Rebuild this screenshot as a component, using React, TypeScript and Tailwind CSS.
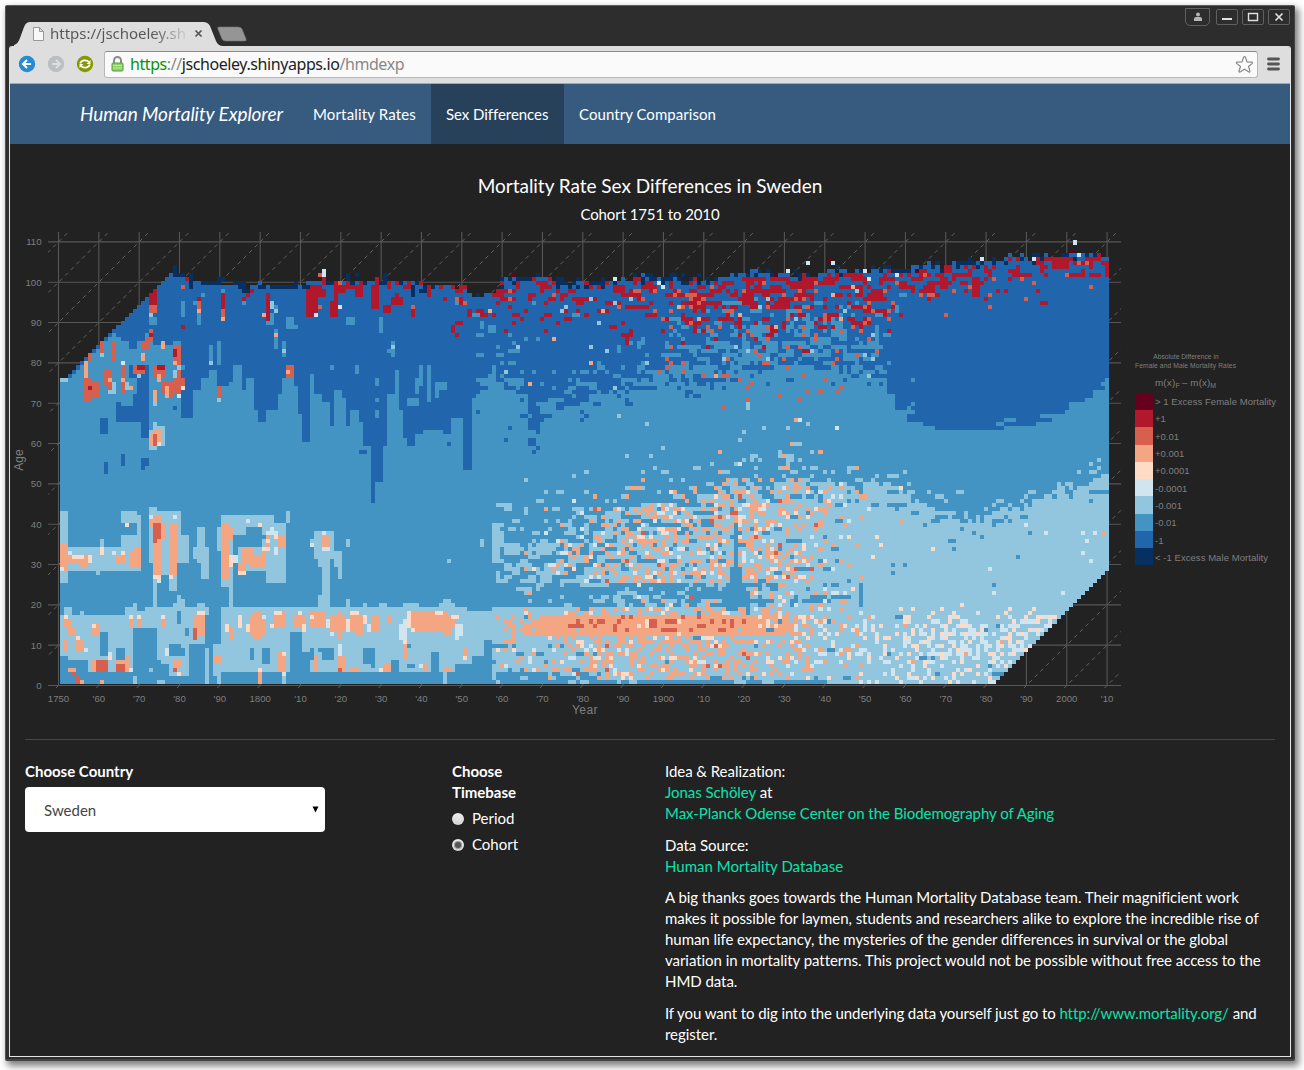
import React from "react";

const COLORS: Record<string, string> = {
  X: "#67001f", R: "#b2182b", O: "#d6604d", S: "#f4a582", P: "#fddbc7",
  W: "#d1e5f0", L: "#92c5de", M: "#4393c3", B: "#2166ac", N: "#053061",
};

const COLS = 260;
const ROWS = 111;

type Steps = number[][];

function lerp(p: Steps, c: number) {
  for (let i = 1; i < p.length; i++) {
    if (c <= p[i][0]) {
      const [a, b] = [p[i - 1], p[i]];
      return a[1] + ((b[1] - a[1]) * (c - a[0])) / (b[0] - a[0]);
    }
  }
  return p[p.length - 1][1];
}

function step(p: Steps, c: number) {
  let v = p[0][1];
  for (const q of p) if (c >= q[0]) v = q[1];
  return v;
}

const TOP: Steps = [[0, 76], [1, 76], [2, 77], [27, 102], [28, 104], [29, 102], [31, 101], [32, 102], [33, 100], [44, 99], [46, 98], [49, 100], [50, 99], [60, 99], [62, 100], [88, 100], [90, 99], [100, 99], [103, 98], [107, 99], [110, 101], [120, 101], [125, 100], [156, 101], [175, 102], [205, 103], [216, 104], [230, 105], [238, 106], [259, 107]];

const DARK: Steps = [[0, 200], [14, 86], [15, 85], [17, 83], [19, 85], [21, 87], [23, 84], [25, 84], [28, 85], [30, 79], [31, 66], [33, 73], [35, 76], [37, 78], [39, 74], [42, 75], [43, 79], [45, 73], [46, 76], [48, 68], [49, 65], [51, 68], [54, 72], [55, 76], [56, 79], [58, 74], [59, 67], [60, 60], [62, 77], [63, 72], [65, 70], [67, 64], [68, 73], [70, 71], [71, 64], [72, 68], [74, 65], [75, 59], [77, 45], [78, 50], [80, 59], [81, 72], [83, 77], [84, 68], [85, 61], [88, 62], [90, 63], [95, 62], [97, 66], [100, 53], [102, 71], [104, 73], [106, 75], [108, 77], [110, 73], [112, 71], [114, 70], [116, 62], [119, 69], [131, 72], [137, 73], [142, 75], [147, 77], [154, 75], [165, 78], [200, 78], [203, 76], [205, 72], [207, 68], [210, 65], [214, 64], [217, 63], [234, 64], [242, 65], [246, 67], [249, 68], [250, 70], [254, 71], [256, 72], [258, 73], [259, 74]];

const LIGHT: Steps = [[107, 39], [120, 40], [135, 42], [150, 44], [164, 47], [172, 49], [190, 49], [200, 48], [210, 46], [216, 43], [222, 40], [230, 41], [236, 43], [244, 46], [252, 48], [259, 50]];

/* key followed by column, row, width, height quadruples */
const PATCHES: [string, string][] = [
  ["L", "0 7 2 10 1 17 2 2 2 6 5 11 7 3 11 14 5 17 1 1 16 17 3 2 18 14 5 4 18 18 1 2 21 18 9 1 23 12 6 7 24 6 9 9 25 5 9 2 27 2 5 6 28 19 3 1 29 20 2 1 29 21 1 1 30 10 7 9 34 19 2 1 36 0 1 9 38 2 2 8 40 3 67 15 40 18 61 1 85 19 4 1 94 19 4 1 95 20 2 1 71 19 1 2 75 19 1 1 79 19 2 1 18 0 1 2 24 0 2 1 39 0 1 2 55 0 1 3 22 3 1 1 95 0 1 3 107 18 2 1"],
  ["M", "10 7 2 6 14 6 2 3 19 4 5 10 18 5 1 8 26 7 5 2 27 9 3 1 31 12 1 2 32 4 4 6 36 9 1 8 37 10 2 9 34 2 2 3 47 6 1 3 50 5 2 4 57 3 3 10 60 3 2 5 62 6 1 3 65 6 3 3 64 8 1 1 75 5 3 4 77 4 1 1 82 3 2 3 86 9 1 1 92 2 2 6 98 3 4 2 102 0 5 7 105 7 2 4 0 0 9 3 99 2 4 2 86 4 2 1"],
  ["L", "0 25 2 18 1 42 1 1 2 28 18 6 15 34 4 3 15 40 4 3 19 34 1 8 9 27 1 1 10 34 1 2 18 42 1 1 22 30 8 13 22 42 2 2 23 19 1 12 24 27 4 5 27 23 2 5 29 30 3 7 29 36 1 6 34 30 2 9 33 31 4 3 35 26 2 6 39 33 1 6 40 24 3 18 42 19 1 9 42 37 11 5 44 28 12 6 51 25 5 15 48 33 4 3 56 40 1 3 63 31 5 7 64 29 3 2 65 19 2 12 64 18 1 4 68 29 2 4 69 26 1 3 62 34 1 2 71 34 1 2 96 30 1 1 104 34 1 2"],
  ["M", "46 34 4 5 43 32 1 3 44 24 7 3 43 34 1 1"],
  ["S", "0 28 2 7 2 30 5 2 5 29 2 3 14 30 2 2 17 29 3 4 18 32 2 2 22 39 2 2 23 27 2 15 24 36 2 4 27 27 2 13 40 26 2 14 42 36 1 3 44 28 2 2 45 30 3 4 47 29 4 3 50 30 1 4 51 34 1 4 54 34 2 3 65 34 2 3 1 14 2 2 1 8 1 3 2 12 2 2 4 8 2 3 8 12 2 3 2 3 2 1 8 3 4 3 14 3 3 3 16 6 1 1 17 14 1 2 19 14 1 2 25 14 1 2 28 4 2 2 33 12 3 5 42 11 1 3 38 5 2 2 47 12 4 5 48 11 2 7 49 0 1 4 53 14 3 4 54 3 2 5 58 14 3 3 62 14 4 4 63 3 1 4 67 13 4 4 69 11 1 7 72 13 3 4 73 12 2 1 77 13 2 4 81 15 1 2 87 14 9 4 88 13 9 3 94 14 4 3 95 12 2 1 85 6 1 4 69 3 2 4 72 3 2 1 80 3 2 2 90 3 1 2 95 3 2 1 100 7 1 2 10 0 1 1 5 0 1 1"],
  ["P", "3 31 3 1 7 30 1 2 10 32 1 2 15 32 1 1 16 39 1 1 23 26 2 1 27 26 1 1 44 27 2 1 42 29 1 3 50 33 2 1 49 39 1 1 53 36 1 2 51 35 1 1 1 16 1 1 8 14 1 1 4 11 1 1 17 16 1 1 19 16 1 1 25 16 1 1 34 17 2 1 44 14 1 3 46 13 1 2 53 17 2 1 52 14 1 1 59 17 1 1 60 13 1 2 62 16 1 1 86 14 1 4 93 17 2 1 97 16 2 1 87 13 1 1 71 14 1 2 75 15 1 2 72 17 2 1 85 10 1 1 12 6 1 1 49 3 1 1 55 7 1 1 69 7 1 1 41 13 1 2 29 2 1 1 79 3 1 1 100 6 1 1"],
  ["W", "2 32 1 1 0 28 1 1 13 32 1 1 24 25 1 1 28 41 1 1 22 41 1 1 43 30 1 2 46 40 1 1 51 37 3 1 53 32 1 2 52 38 1 1 65 37 1 1 65 33 2 1 62 34 1 1 84 11 2 4 85 15 1 1 98 11 1 4 99 12 1 3 66 14 1 2 71 13 1 1 76 13 1 2 69 7 1 3 67 12 1 1 6 8 1 1 12 7 1 1 17 3 1 1 26 7 1 2 50 16 1 1 4 1 1 1 89 4 1 1 55 2 1 1"],
  ["O", "23 36 2 4 23 35 1 1 9 3 3 3 14 3 2 2 3 2 1 1 4 0 1 2 28 3 1 1 33 11 1 3 69 3 1 1"],
  ["B", "10 62 2 4 14 65 8 4 14 68 1 2 18 68 4 4 19 65 3 14 20 61 2 5 17 76 4 3 15 54 1 3 20 54 2 2 20 53 1 3 11 52 1 3 28 68 1 1 30 66 3 12 86 59 2 3 96 59 1 1 116 59 2 2 117 57 1 1 60 60 2 8 74 57 2 1 111 63 1 1 110 60 1 1"],
  ["M", "22 89 2 2 23 92 1 2 30 91 1 3 30 94 1 1 33 94 1 1 35 96 1 1 34 89 1 3 45 94 1 1 40 96 1 2 51 89 2 3 53 92 1 2 53 83 1 5 55 81 1 4 56 88 2 3 57 88 2 1 71 89 2 2 79 87 1 4 82 81 1 4 81 82 2 1 67 78 1 1 73 77 1 2 78 74 1 2 78 70 1 1 78 66 1 2 83 73 1 5 89 74 1 5 91 70 1 9 88 72 1 4 93 71 1 4 94 73 2 2 86 69 3 2 104 88 1 1 98 94 1 1 106 87 2 2 102 91 2 1 107 75 1 4 112 82 2 1 37 79 1 5 39 79 1 6 35 71 2 5 112 74 3 2 127 91 2 1"],
  ["L", "0 75 2 1 10 81 1 1 7 80 1 1 22 91 1 1 37 79 1 1 55 82 1 1 9 74 1 1 12 72 2 3 11 75 1 1 16 73 1 2 19 76 1 1 28 76 2 2 30 75 1 1 29 78 1 2 39 70 1 1 39 73 1 1 22 59 1 4 23 59 3 5 22 58 2 1 23 63 1 2 52 93 1 2 53 92 1 1 82 83 1 1 23 69 1 1 8 71 1 1"],
  ["O", "6 70 2 6 8 71 2 4 11 74 2 4 12 73 1 5 7 80 1 2 10 82 1 3 13 80 1 5 15 72 1 8 20 83 2 2 21 85 2 1 22 86 1 2 28 79 2 5 18 77 3 2 23 76 3 3 25 72 5 3 26 74 2 1 28 73 3 3 29 76 1 2 27 71 1 1 22 92 2 2 34 92 1 3 40 90 1 3 39 71 1 3 56 76 2 3 30 98 1 1 64 101 1 1 69 99 1 1 87 92 1 2 68 96 1 1 64 93 1 1"],
  ["S", "6 76 1 3 6 79 1 1 20 80 1 2 25 83 1 2 23 70 1 3 26 71 1 3 12 75 1 1 15 75 1 1 24 75 1 2 34 92 1 1 40 90 1 1 50 91 1 1 53 86 1 1 17 73 1 1 56 77 1 1 28 79 1 1 22 59 1 3 23 62 2 1 24 60 1 2 70 98 1 1"],
  ["O", "23 59 1 3"],
  ["P", "24 59 1 1 30 73 1 1"],
  ["W", "29 71 1 1 15 79 1 1 65 101 1 2 63 91 1 1 69 93 1 1"],
  ["R", "7 73 1 1 19 78 2 1 24 78 2 1 28 81 1 2 22 94 2 3 23 97 1 1 22 86 1 1 31 100 1 1 34 95 1 1 40 93 1 4 45 95 1 1 46 96 1 1 47 97 1 1 51 90 1 7 30 88 1 1 61 91 2 7 62 92 2 6 63 96 3 2 62 98 3 1 65 99 1 2 67 91 2 4 68 94 1 6 69 97 2 2 71 98 2 1 73 96 2 3 77 93 2 6 78 99 1 2 82 94 3 2 83 96 1 1 80 92 2 2 87 91 1 2 81 98 1 1 85 98 3 1 86 99 1 1 91 96 1 2 94 98 1 1 97 87 1 2 98 89 2 1 95 95 1 1 89 97 1 1"],
  ["N", "28 102 1 2 28 101 3 1 32 98 1 4 35 99 5 1 39 100 2 1 43 99 1 1 44 98 2 2 45 97 2 1 49 98 2 1 52 98 7 1 58 99 1 1 60 98 2 1 66 99 2 1 71 100 1 2 73 101 1 1 80 99 1 3 87 96 1 3 75 99 1 1 89 97 2 1 92 98 1 1"],
];

function buildGrid(): string[][] {
  let seed = 90210;
  const rnd = () => {
    seed = (seed + 0x6d2b79f5) | 0;
    let t = Math.imul(seed ^ (seed >>> 15), 1 | seed);
    t = (t + Math.imul(t ^ (t >>> 7), 61 | t)) ^ t;
    return ((t ^ (t >>> 14)) >>> 0) / 4294967296;
  };
  const g: string[][] = [];
  for (let r = 0; r < ROWS; r++) {
    g.push([]);
    let u = rnd();
    for (let c = 0; c < COLS; c++) {
      if (rnd() > 0.3) u = rnd();
      const v = rnd();
      const w = rnd();
      const top = Math.round(lerp(TOP, c));
      const dark = step(DARK, c);
      const depth = top - 1 - r;
      let k = "M";
      if (c >= 232 && r < c - 231) {
        g[r].push("");
        continue;
      }
      if (r >= dark) {
        k = "B";
        const h = r - dark;
        if (c > 102 && c < 212 && depth > 5) {
          const p = c < 150
            ? 0.34 * Math.exp(-h / 4) + (h < 16 ? 0.03 : 0.015)
            : (c > 203 ? 0.14 : c > 196 ? 0.4 : 0.55) * Math.exp(-Math.pow(h / 11, 2)) + 0.03;
          if (u < p) k = "M";
        } else if (c >= 207 && h < 2 && u < 0.15) k = "M";
      } else if (c > 102 && c < 207 && dark - r < 5 && u < 0.16) k = "B";
      if (c < 14 && c > 1 && depth === 0) k = "B";
      if (c >= 98) {
        if (depth >= 1) {
          const hi = c < 120 ? 0.42 : c < 150 ? 0.42 : c < 205 ? 0.5 : c < 230 ? 0.42 : 0.34;
          const reach = c < 150 ? 7 : c < 190 ? 10 : c < 212 ? 9 : 6;
          const p = hi * Math.exp(-Math.pow(depth / reach, 2)) + (depth < 18 && c > 135 && c < 205 ? 0.05 : 0);
          if (u > 1 - p) k = v < 0.1 ? "O" : "R";
          if (depth > 3 && depth < 28 && c > 145 && c < 203 && w < 0.05) k = "O";
          if (depth > 3 && depth < 9 && c >= 203 && c < 240 && w < 0.03) k = "O";
          if (depth > 3 && depth < 28 && c > 105 && c < 203 && w > 0.985) k = v < 0.4 ? "S" : "L";
        }
        if (depth === 0) k = v < 0.32 ? "N" : u < 0.25 ? "R" : u < 0.75 ? "B" : "";
        if (depth === -1) k = v < 0.16 ? "N" : v < 0.25 ? "B" : v < 0.28 ? "W" : "";
        if (depth === 1 && v < 0.14) k = "N";
        if (c > 100 && c < 109 && depth >= 0 && depth < 2) k = v < 0.15 ? "N" : "";
      } else if (c > 65 && depth < 1 && depth >= 0) {
        k = v < 0.25 ? "R" : v < 0.5 ? "N" : "B";
      }
      if (c >= 107 && r < 64) {
        const e = lerp(LIGHT, c);
        let p = 0;
        const full = lerp([[107, 0.36], [118, 0.4], [128, 0.62], [140, 0.82], [160, 0.87], [185, 0.94], [200, 0.993], [259, 1]], c);
        const spread = c > 195 ? 2.2 : 3.4;
        if (r > e) p = full * 0.62 * Math.exp(-(r - e) / spread);
        else if (r > e - 5) p = full * 0.84;
        else if (r >= 25) p = full;
        else if (r >= 19) p = lerp([[107, 0.03], [130, 0.2], [150, 0.4], [170, 0.5], [184, 0.8], [200, 0.98], [259, 1]], c);
        else if (r >= 3) p = c < 125 && r < 10 ? 0.86 : 0.985;
        else if (r >= 1) p = c < 120 ? 0.15 : c < 135 ? 0.6 : 0.95;
        else p = lerp([[107, 0.03], [165, 0.1], [185, 0.4], [195, 1]], c);
        if (u < p) {
          k = "L";
          let s = 0;
          let o = 0.04;
          if (r > 24 && r < e + 6) s = lerp([[107, 0.02], [120, 0.08], [134, 0.32], [150, 0.4], [176, 0.38], [186, 0.2], [196, 0.08], [204, 0.005], [259, 0.001]], c);
          else if (r >= 19) s = lerp([[107, 0], [140, 0.1], [175, 0.3], [188, 0.1], [200, 0.004]], c);
          else if (r >= 12 && r <= 16) {
            s = lerp([[107, 0.18], [114, 0.4], [120, 0.98], [173, 0.98], [181, 0.75], [188, 0.25], [200, 0.1], [240, 0.22], [259, 0.3]], c);
            o = c > 124 && c < 172 && r >= 13 ? 0.1 : 0;
          } else if (r > 0) s = lerp([[107, 0.06], [122, 0.13], [132, 0.42], [165, 0.42], [182, 0.2], [200, 0.05], [259, 0.1]], c);
          const centre = r >= 12 && r <= 16 && c < 173;
          if (v < s) {
            if (w < o && c < 190) k = "O";
            else if (c > 200) k = "P";
            else if (w > (centre ? 0.97 : 0.82)) k = "P";
            else k = "S";
          } else if (w < (c < 195 ? (c < 122 ? 0.03 : 0.08) : r > 17 ? 0.003 : 0.015) && r > 1) k = "W";
          if (c > 180 && r < 17) {
            const q = lerp([[180, 0.08], [200, 0.18], [215, 0.34], [230, 0.5], [245, 0.45]], c) * (r > 14 ? 0.5 : r < 5 ? 0.7 : 1);
            if (w < q) k = v < 0.28 ? (v < 0.02 ? "S" : "P") : "W";
          }
        }
      }
      if (depth < -1 || (depth < 0 && c < 98)) k = "";
      g[r].push(k);
    }
  }
  const paint = (key: string, list: string) => {
    const n = list.split(" ").map(Number);
    for (let i = 0; i + 3 < n.length; i += 4)
      for (let r = n[i + 1]; r < n[i + 1] + n[i + 3]; r++)
        for (let c = n[i]; c < n[i] + n[i + 2]; c++) g[r][c] = key;
  };
  for (const [k, l] of PATCHES) paint(k, l);
  paint("M", "167 18 1 22 166 20 3 9 164 19 6 5 170 17 1 6 159 21 5 2 198 19 1 6 186 20 3 2 191 21 5 1 209 29 1 1 206 29 1 1 206 27 1 1 237 31 1 1 231 24 1 1 240 37 1 1");
  paint("L", "107 31 2 9 109 34 1 4 110 32 4 3 118 32 4 3 119 25 3 3 110 28 2 2");
  paint("O", "126 14 4 1 133 15 2 1 146 14 2 2 149 13 4 1 150 15 3 1 158 14 2 1 163 13 2 1 166 14 1 2");
  paint("W", "251 109 1 1 191 104 1 1 185 104 1 1 241 105 1 1 252 106 1 1 199 102 1 1 253 37 1 1 256 37 1 1 253 32 1 1 255 30 1 1 254 35 1 1 200 100 1 1 207 101 1 1 148 99 1 1 149 98 1 1 183 65 1 1");
  paint("X", "112 101 1 1 190 105 1 1 250 107 1 1 212 102 1 1 177 101 1 1");
  paint("L", "170 68 1 2 174 63 1 1 169 62 1 1 168 60 1 1 182 59 2 1 185 64 1 1 138 66 1 1 145 64 1 1 149 58 1 1 146 56 1 1 171 56 1 1 173 55 1 1 178 57 1 1 181 55 1 2 180 54 1 2 144 52 1 1 257 55 1 1 255 54 1 1");
  paint("S", "182 65 1 1 163 57 1 1 258 37 1 1 208 40 1 1");
  paint("R", "246 103 4 3 254 105 4 1 255 103 1 2 259 101 1 4 169 95 3 2 178 94 3 2 183 98 4 2 201 95 3 2 157 93 3 1 172 97 3 1 218 98 2 3 219 102 2 2 226 96 2 5 236 101 3 1");
  paint("O", "164 68 1 1 170 70 1 1 170 73 1 1 183 70 1 1 185 72 1 1 188 72 1 1 192 72 1 1 178 71 1 1 193 73 1 1 213 96 1 1 215 96 1 1 219 91 1 1 230 93 1 1 239 95 1 1 255 98 1 1");
  return g;
}

function cellPaths() {
  const g = buildGrid();
  const out: Record<string, string> = {};
  const X = (c: number) => Math.round(60 + c * 4.0345);
  const Y = (r: number) => Math.round(684 - r * 4.032);
  for (let r = 0; r < ROWS; r++) {
    let c = 0;
    while (c < COLS) {
      const k = g[r][c];
      let e = c + 1;
      while (e < COLS && g[r][e] === k) e++;
      if (k) out[k] = (out[k] || "") + `M${X(c)} ${Y(r + 1)}H${X(e)}V${Y(r)}H${X(c)}z`;
      c = e;
    }
  }
  return out;
}

const PATHS = cellPaths();
const STEP = 40.33;
const X_LABELS = ["1750", "'60", "'70", "'80", "'90", "1800", "'10", "'20", "'30", "'40", "'50", "'60", "'70", "'80", "'90", "1900", "'10", "'20", "'30", "'40", "'50", "'60", "'70", "'80", "'90", "2000", "'10"];
const LEGEND: [string, string][] = [
  ["X", "> 1 Excess Female Mortality"], ["R", "+1"], ["O", "+0.01"], ["S", "+0.001"], ["P", "+0.0001"],
  ["W", "-0.0001"], ["L", "-0.001"], ["M", "-0.01"], ["B", "-1"], ["N", "< -1 Excess Male Mortality"],
];

function Chart() {
  return (
    <svg width="1280" height="501" viewBox="10 228 1280 501" className="block font-['Liberation_Sans',sans-serif]" fill="#7f7f7f">
      <defs>
        <clipPath id="panel"><rect x="48" y="232" width="1073" height="456" /></clipPath>
      </defs>
      <g clipPath="url(#panel)" stroke="#565656" strokeWidth="1.1">
        {X_LABELS.map((_, i) => <path key={i} d={`M${58.5 + i * STEP} 232V686`} />)}
        {Array.from({ length: 12 }, (_, i) => <path key={i} d={`M48 ${685.5 - i * STEP}H1121`} />)}
        {Array.from({ length: 39 }, (_, i) => (
          <path key={i} strokeDasharray="4 4" stroke="#6a6a6a" strokeWidth="0.9" d={`M${58.5 + (i - 12) * STEP - 3} 688.5l460 -460`} />
        ))}
      </g>
      <g shapeRendering="crispEdges">
        {Object.keys(PATHS).map((k) => <path key={k} d={PATHS[k]} fill={COLORS[k]} />)}
      </g>
      <g fontSize="9.6">
        {Array.from({ length: 12 }, (_, i) => (
          <text key={i} x="41.5" y={689 - i * STEP} textAnchor="end">{i * 10}</text>
        ))}
        {X_LABELS.map((t, i) => <text key={i} x={58.5 + i * STEP} y="702" textAnchor="middle">{t}</text>)}
      </g>
      <text x="585" y="714" fontSize="12" textAnchor="middle" letterSpacing="0.4">Year</text>
      <text transform="translate(22.5 460) rotate(-90)" fontSize="12" textAnchor="middle">Age</text>
      <g fontSize="6.7" textAnchor="middle">
        <text x="1186" y="359">Absolute Difference in</text>
        <text x="1185.5" y="368" textLength="101">Female and Male Mortality Rates</text>
      </g>
      <text x="1155" y="386" fontSize="9.8" letterSpacing="0.2">m(x)<tspan fontSize="7" dy="1.5">F</tspan></text>
      <text x="1182" y="386" fontSize="9.8" letterSpacing="0.1">– m(x)<tspan fontSize="7" dy="1.5">M</tspan></text>
      {LEGEND.map(([k, label], i) => (
        <g key={k}>
          <rect x="1135" y={Math.round(393 + i * 17.22)} width="18" height={i === 9 ? 17 : 18} fill={COLORS[k]} />
          <text x="1155" y={405 + i * 17.33} fontSize="9.5" textLength={i === 0 ? 121 : i === 9 ? 113 : undefined}>{label}</text>
        </g>
      ))}
    </svg>
  );
}

function WindowButton({ children }: { children: React.ReactNode }) {
  return (
    <div className="flex h-4 w-[22px] items-center justify-center rounded-[2px] border border-[#606060]">
      <svg width="12" height="12" viewBox="0 0 12 12" fill="none" stroke="#e0e0e0" strokeWidth="2">{children}</svg>
    </div>
  );
}

function TitleBar() {
  return (
    <div className="flex h-[40px] justify-between">
      <div className="relative ml-[5px] h-[40px] w-[240px]">
        <svg className="absolute left-0 top-0" width="240" height="40" viewBox="14 6 240 40">
          <path d="M10 46C17 45 18 43 20 38L24 27Q26 22 30 22H203Q208 22 210 26L216 41Q218 46 223 46z" fill="#dedede" />
          <path d="M219 27H238Q241 27 242 29L246 39Q247 41 244 41H226Q223 41 222 39L218 29Q217 27 219 27z" fill="#959595" stroke="#777" strokeWidth=".6" />
          <path d="M33.500 27.500h6l4 4v9h-10zM39.500 27.500v4h4" fill="#f8f8f8" stroke="#999" />
          <path d="M195.500 30.500l6 6m0-6l-6 6" stroke="#555" strokeWidth="1.7" />
        </svg>
        <div className="absolute left-[36px] top-[17px] w-[136px] overflow-hidden whitespace-nowrap bg-gradient-to-r from-[#555] from-75% to-[#d0d0d0] bg-clip-text font-['Noto_Sans',sans-serif] text-[15px] leading-[21px] tracking-[-0.02px] text-transparent">https://jschoeley.sh</div>
      </div>
      <div className="mr-[1px] flex gap-1 pt-[3px]">
        <div className="mr-[2px] mt-[-1px] flex h-[18px] w-[25px] items-center justify-center rounded-b-[5px] border border-[#606060]">
          <svg width="10" height="10" viewBox="0 0 10 10" fill="#b5b5b5"><circle cx="5" cy="2.500" r="2" /><path d="M1 9V7q0-2 2-2h4q2 0 2 2v2z" /></svg>
        </div>
        <WindowButton><path d="M1 8h10" /></WindowButton>
        <WindowButton><path d="M1.500 2.500h9v7h-9z" strokeWidth="1.400" /></WindowButton>
        <WindowButton><path d="M2.500 2.500l7 7m0-7l-7 7" strokeWidth="1.700" /></WindowButton>
      </div>
    </div>
  );
}

function Toolbar() {
  return (
    <div className="flex h-[38px] items-center rounded-t-[2px] border-b border-[#a8a8a8] bg-[#dedede] pb-px pl-[8px] pr-[10px]">
      <svg width="76" height="18" viewBox="0 0 76 18" fill="none" strokeWidth="2">
        <circle cx="9" cy="9" r="8.200" fill="#268bd2" /><path d="M13 9H5.500M9 5L5 9l4 4" stroke="#fff" />
        <circle cx="38" cy="9" r="8.200" fill="#bcbfc1" /><path d="M34 9h7.500M38 5l4 4-4 4" stroke="#dedede" />
        <circle cx="67" cy="9" r="8.200" fill="#859900" />
        <path d="M62.200 8.500A5 4.200 0 0 1 71 7M71.800 9.500A5 4.200 0 0 1 63 11" stroke="#fff" strokeWidth="1.800" />
        <path d="M72.500 5v4h-4zM61.500 13V9h4z" fill="#fff" />
      </svg>
      <div className="ml-[10px] flex h-[27px] w-[1154px] items-center justify-between rounded-[3px] border border-[#b8b8b8] border-t-[#8c8c8c] bg-[#fafafa] pl-[6px] pr-[3px]">
        <div className="flex items-center">
          <svg width="13" height="16" viewBox="0 0 13 16">
            <path d="M3 7V4.500a3.500 3.500 0 0 1 7 0V7" fill="none" stroke="#8b8b8b" strokeWidth="2" />
            <rect x="1" y="7" width="11" height="8" rx="1" fill="#8fd169" stroke="#5a9a3c" />
            <path d="M2 9.500h9M2 12h9" stroke="#bce8a2" />
          </svg>
          <div className="ml-[6px] whitespace-nowrap font-['Noto_Sans',sans-serif] text-[16px] leading-[22px] tracking-[-0.42px] text-[#888]">
            <span className="text-[#0a930a]">https</span>://<span className="text-[#222]">jschoeley.shinyapps.io</span>/hmdexp
          </div>
        </div>
        <svg width="19" height="19" viewBox="0 0 19 19"><path d="M9.500 1.500Q10 1.500 10.500 2.500L12 7l5 .2q1 .3.200 1.200L13.500 11.500l1.400 4.700q0 1.200-1 .8L9.500 14.300 5 17q-1 .4-1-.8L5.500 11.500 1.700 8.400q-.8-.9.300-1.200L7 7l1.500-4.500q.5-1 1-1z" fill="#fff" stroke="#888" strokeWidth="1.200" /></svg>
      </div>
      <svg className="ml-[9px]" width="13" height="14" viewBox="0 0 13 14"><path d="M1.500 2h10M1.500 7h10M1.500 12h10" stroke="#555" strokeWidth="2.800" strokeLinecap="round" /></svg>
    </div>
  );
}

function Radio({ label, checked }: { label: string; checked?: boolean }) {
  return (
    <div className="mt-[5px] flex h-[21px] items-center gap-2">
      <span className="flex size-3 items-center justify-center rounded-full bg-gradient-to-b from-[#eee] to-[#d4d4d4]">
        {checked && <span className="size-[6px] rounded-full bg-[#555] ring-1 ring-[#999]" />}
      </span>
      <span>{label}</span>
    </div>
  );
}

export default function App() {
  return (
    <div className="h-[1070px] w-[1304px] overflow-hidden bg-white p-[5px]">
      <div className="h-[1056px] w-[1290px] rounded-[2px] border border-b-2 border-[#454345] border-t-[#5c5c5c] border-l-[#555] bg-[#2d2d2d] px-[3px] shadow-[3px_4px_7px_1px_rgba(0,0,0,0.5)]">
        <TitleBar />
        <div className="h-[1011px] rounded-t-[3px] border border-t-0 border-[#e4e4e4] bg-[#222] font-['Lato',sans-serif] text-[15px] leading-[21px] text-white [font-variant-ligatures:none]">
          <Toolbar />
          <nav className="flex h-[60px] items-center bg-[#375a7f] pl-[70px]">
            <div className="mt-[-1px] mr-[15px] w-[203px] whitespace-nowrap text-[19px] italic tracking-[-0.08px]">Human Mortality Explorer</div>
            <div className="w-[133px] pl-[15px] tracking-[0.15px]">Mortality Rates</div>
            <div className="flex h-full w-[133px] items-center bg-[#28415b] pl-[15px] tracking-[-0.05px]">Sex Differences</div>
            <div className="px-[15px] tracking-[0.05px]">Country Comparison</div>
          </nav>
          <header className="h-[84px] pt-[30px] text-center">
            <h1 className="text-[19px] leading-[23px] tracking-[-0.03px]">Mortality Rate Sex Differences in Sweden</h1>
            <h2 className="mt-[7px] tracking-[-0.1px]">Cohort 1751 to 2010</h2>
          </header>
          <Chart />
          <hr className="mx-[15px] mt-[10px] border-[#464545]" />
          <div className="flex pl-[15px] pt-[21px]">
            <div className="w-[427px]">
              <div className="font-bold">Choose Country</div>
              <div className="mt-[5px] flex h-[45px] w-[300px] items-center justify-between rounded-[4px] bg-white pl-[19px] pr-[6px] text-[#464545]">
                <span className="pt-[1px]">Sweden</span>
                <svg width="7" height="7" viewBox="0 0 7 7"><path d="M.5.500h6l-3 6z" fill="#000" /></svg>
              </div>
            </div>
            <div className="w-[213px]">
              <div className="font-bold">Choose<br />Timebase</div>
              <Radio label="Period" />
              <Radio label="Cohort" checked />
            </div>
            <div className="w-[610px] space-y-[10.5px] tracking-[-0.05px]">
              <p>Idea &amp; Realization:<br /><a className="text-[#0ce3ac]">Jonas Schöley</a> at<br /><a className="text-[#0ce3ac]">Max-Planck Odense Center on the Biodemography of Aging</a></p>
              <p>Data Source:<br /><a className="tracking-[0.03px] text-[#0ce3ac]">Human Mortality Database</a></p>
              <p>A big thanks goes towards the Human Mortality Database team. Their magnificient work<br />makes it possible for laymen, students and researchers alike to explore the incredible rise of<br />human life expectancy, the mysteries of the gender differences in survival or the global<br />variation in mortality patterns. This project would not be possible without free access to the<br />HMD data.</p>
              <p><span className="tracking-[-0.1px]">If you want to dig into the underlying data yourself just go to </span><a className="text-[#0ce3ac]">http://www.mortality.org/</a> and<br />register.</p>
            </div>
          </div>
        </div>
      </div>
    </div>
  );
}
